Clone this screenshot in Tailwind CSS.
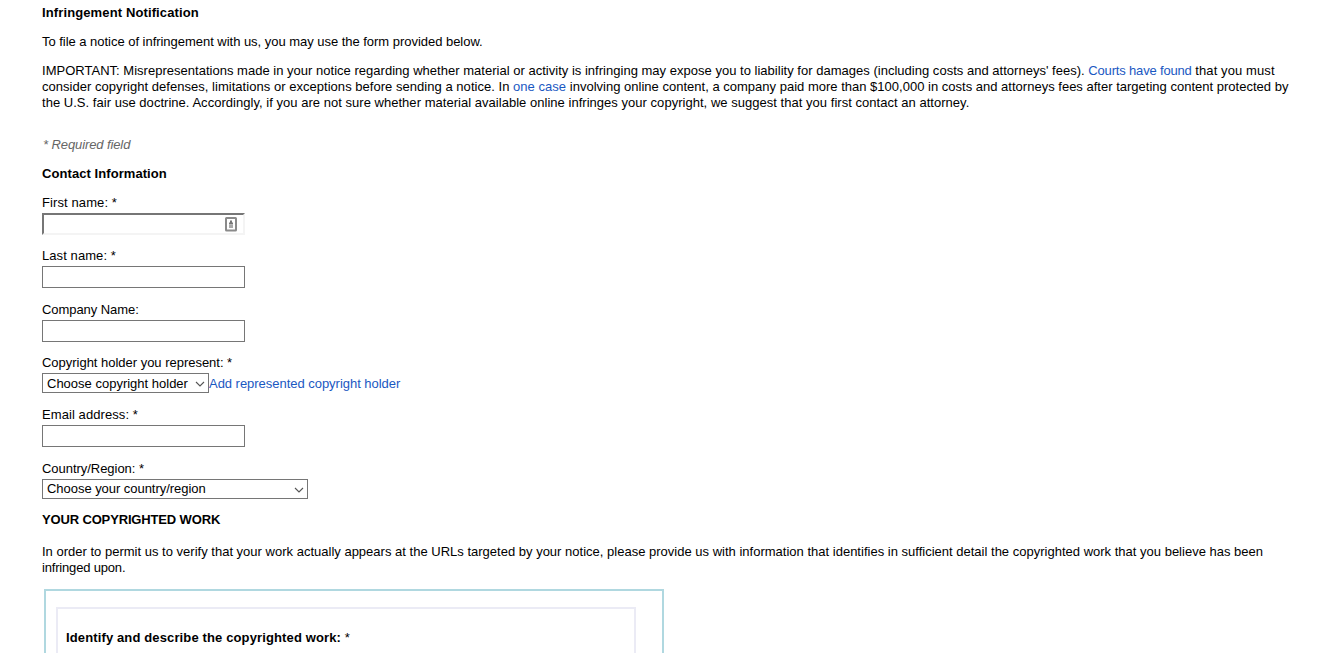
<!doctype html>
<html lang="en">
<head>
    <meta charset="utf-8">
    <meta name="viewport" content="width=device-width,initial-scale=1">
    <script src="https://cdn.jsdelivr.net/npm/@tailwindcss/browser@4"></script>
    <title>Infringement Notification</title>
</head>
<body class="bg-white text-black font-['Liberation_Sans',Arial,sans-serif] text-[13px] leading-4">

<main class="pl-[42px] pt-[5px] whitespace-nowrap">
    <h1 class="font-bold tracking-[0.12px]">Infringement Notification</h1>
    <p class="mt-[13px] tracking-[-0.03px]">To file a notice of infringement with us, you may use the form provided below.</p>
    <p class="mt-[13px]">
        <span class="tracking-[0.017px]">IMPORTANT: Misrepresentations made in your notice regarding whether material or activity is infringing may expose you to liability for damages (including costs and attorneys' fees). <a href="#" class="text-[#1a58c2] tracking-[-0.17px]">Courts have found</a> <span class="tracking-[0.1px]">that you must</span></span><br>
        <span class="tracking-[0.034px]">consider copyright defenses, limitations or exceptions before sending a notice. In <a href="#" class="text-[#1a58c2]">one case</a> <span class="tracking-[0.008px]">involving online content, a company paid more than $100,000 in costs and attorneys fees after targeting content protected by</span></span><br>
        <span class="tracking-[0.03px]">the U.S. fair use doctrine. Accordingly, if you are not sure whether material available online infringes your copyright, we suggest that you first contact an attorney.</span>
    </p>

    <p class="mt-[26px] pl-px italic text-[#666] tracking-[-0.1px]">* Required field</p>
    <h2 class="mt-[13px] font-bold tracking-[0.07px]">Contact Information</h2>

    <form>
        <div class="mt-[13px]">
            <label for="first" class="block tracking-[0.1px]">First name: *</label>
            <div class="relative mt-0.5 w-[203px]">
                <input id="first" type="text" class="block w-full h-[22px] border-2 border-t-[#767676] border-l-[#767676] border-r-[#f4f4f4] border-b-[#f4f4f4]">
                <!-- autofill badge -->
                <svg class="absolute right-[8px] top-[4px]" width="12" height="15" viewBox="0 0 12 15">
                    <rect x="1" y="1" width="10" height="12.5" rx="0.5" fill="#fff" stroke="#8a8a8a" stroke-width="2"/>
                    <path d="M5 3.5h2v2h1v2H4v-2h1z" fill="#777"/>
                    <path d="M4 8h4v3H4z" fill="#aaa"/>
                </svg>
            </div>
        </div>
        <div class="mt-[13px]">
            <label for="last" class="block tracking-[0.08px]">Last name: *</label>
            <input id="last" type="text" class="block mt-0.5 w-[203px] h-[22px] border border-[#767676]">
        </div>
        <div class="mt-[14px]">
            <label for="company" class="block tracking-[-0.06px]">Company Name:</label>
            <input id="company" type="text" class="block mt-0.5 w-[203px] h-[22px] border border-[#767676]">
        </div>
        <div class="mt-[13px]">
            <label class="block tracking-[-0.02px]">Copyright holder you represent: *</label>
            <div class="mt-0.5 flex items-center">
                <button type="button" class="flex items-center justify-between w-[167px] h-5 border border-[#767676] pl-1 pr-[3px]">
                    <span class="pt-px">Choose copyright holder</span>
                    <svg class="mt-px" width="10" height="6" viewBox="0 0 10 6" fill="none" stroke="#555" stroke-width="1.1"><path d="M1 1l4 4 4-4"/></svg>
                </button>
                <a href="#" class="pt-px text-[#1a58c2] tracking-[-0.03px]">Add represented copyright holder</a>
            </div>
        </div>
        <div class="mt-[14px]">
            <label for="email" class="block tracking-[0.08px]">Email address: *</label>
            <input id="email" type="text" class="block mt-0.5 w-[203px] h-[22px] border border-[#767676]">
        </div>
        <div class="mt-[14px]">
            <label class="block tracking-[-0.04px]">Country/Region: *</label>
            <button type="button" class="mt-0.5 flex items-center justify-between w-[266px] h-5 border border-[#767676] pl-1 pr-[3px]">
                <span class="tracking-[-0.04px]">Choose your country/region</span>
                <svg class="mt-px" width="10" height="6" viewBox="0 0 10 6" fill="none" stroke="#555" stroke-width="1.1"><path d="M1 1l4 4 4-4"/></svg>
            </button>
        </div>

        <h2 class="mt-[13px] font-bold tracking-[-0.15px]">YOUR COPYRIGHTED WORK</h2>
        <p class="mt-4">
            <span class="tracking-[0.007px]">In order to permit us to verify that your work actually appears at the URLs targeted by your notice, please provide us with information that identifies in sufficient detail the copyrighted work that you believe has been</span><br>
            <span class="tracking-[-0.18px]">infringed upon.</span>
        </p>

        <div class="mt-[13px] ml-0.5 w-[620px] h-16 border-2 border-b-0 border-[#b0d8e0] pt-4 pl-[10px]">
            <div class="w-[580px] h-[46px] border-2 border-b-0 border-[#ebebf5] pt-[21px] pl-2">
                <label><b class="tracking-[0.13px]">Identify and describe the copyrighted work:</b> *</label>
            </div>
        </div>
    </form>
</main>

</body>
</html>
